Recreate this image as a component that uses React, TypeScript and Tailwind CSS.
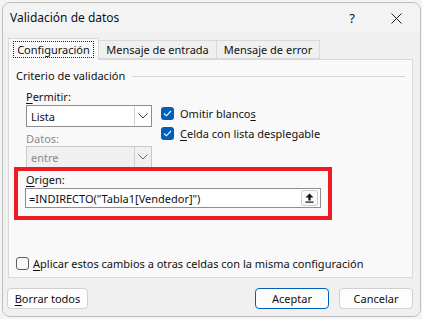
import React from "react";

const U = ({ children }: { children: React.ReactNode }) => (
  <span className="underline underline-offset-[2px] decoration-[1px]">{children}</span>
);

const Chevron = ({ color = "#444" }: { color?: string }) => (
  <svg width="10" height="6" viewBox="0 0 10 6" fill="none">
    <path d="M0.5 0.5 L5 5 L9.5 0.5" stroke={color} strokeWidth="1" />
  </svg>
);

const Check = () => (
  <span className="flex h-[13px] w-[13px] items-center justify-center rounded-[3px] bg-[#005fb8]">
    <svg width="9" height="7" viewBox="0 0 9 7" fill="none">
      <path d="M1 3.5 L3.4 5.8 L8 1" stroke="white" strokeWidth="1.1" />
    </svg>
  </span>
);

export default function App() {
  return (
    <div
      className="h-[319px] w-[422px] overflow-hidden bg-[#f4f4f4] pl-[2px] pr-[1px] pt-[2px] pb-[2px]"
      style={{ fontFamily: '"Noto Sans", "Open Sans", sans-serif' }}
    >
      <div className="flex h-[315px] flex-col overflow-hidden rounded-[8px] border border-[#bdbdbd] bg-[#f0f0f0] text-[11px] leading-[15px] text-[#111]">
        {/* Title bar */}
        <div className="flex h-[30px] items-center bg-[#f3f3f3] pl-[7px]">
          <span className="text-[12px] leading-[16px]">Validación de datos</span>
          <span className="ml-auto mr-[36px] text-[13px] leading-[16px]">?</span>
          <svg className="mr-[18px]" width="11" height="11" viewBox="0 0 11 11">
            <path d="M0.5 0.5 L10.5 10.5 M10.5 0.5 L0.5 10.5" stroke="#222" strokeWidth="1" />
          </svg>
        </div>

        <div className="flex flex-1 flex-col bg-[#f0f0f0] pl-[5px] pr-[7px] pt-[5px]">
          {/* Tabs */}
          <div className="flex items-end">
            <div className="relative z-10 -mb-px flex h-[22px] w-[91px] items-center justify-center border border-b-0 border-[#d9d9d9] bg-[#f9f9f9]">
              <span className="border border-dotted border-[#222] px-[3px] leading-[15px]">Configuración</span>
            </div>
            <div className="flex h-[19px] w-[118px] items-center justify-center border border-l-0 border-[#d9d9d9] bg-[#f0f0f0]">
              Mensaje de entrada
            </div>
            <div className="flex h-[19px] w-[103px] items-center justify-center border border-l-0 border-[#d9d9d9] bg-[#f0f0f0]">
              Mensaje de error
            </div>
          </div>

          {/* Panel */}
          <div className="flex h-[219px] flex-col border border-[#d9d9d9] bg-[#f9f9f9] pl-[7px] pt-[8px]">
            <div className="flex h-[15px] items-center">
              <span>Criterio de validación</span>
              <div className="ml-[7px] mr-[7px] mt-[1px] h-px flex-1 bg-[#d4d4d4]" />
            </div>

            <div className="mt-[6px] flex pl-[10px]">
              <div className="flex w-[126px] flex-col">
                <span className="h-[15px]">
                  <U>P</U>ermitir:
                </span>
                <div className="mt-[1px] flex h-[22px] items-center border border-[#8e8e8e] bg-white">
                  <span className="flex-1 pl-[4px]">Lista</span>
                  <div className="flex h-full w-[17px] items-center justify-center border-l border-[#d0d0d0]">
                    <Chevron />
                  </div>
                </div>
                <span className="mt-[4px] h-[15px] text-[#8a8a8a]">Datos:</span>
                <div className="flex h-[21px] items-center border border-b-0 border-[#c8c8c8] bg-[#f0f0f0]">
                  <span className="flex-1 pl-[4px] text-[#8a8a8a]">entre</span>
                  <div className="flex h-full w-[17px] items-center justify-center border-l border-[#d0d0d0]">
                    <Chevron color="#666" />
                  </div>
                </div>
              </div>
              <div className="ml-[9px] mt-[17px] flex flex-col gap-[5px]">
                <div className="flex h-[15px] items-center gap-[6px]">
                  <Check />
                  <span>
                    Omitir blanco<U>s</U>
                  </span>
                </div>
                <div className="flex h-[15px] items-center gap-[6px]">
                  <Check />
                  <span>
                    <U>C</U>elda con lista desplegable
                  </span>
                </div>
              </div>
            </div>

            {/* Red box */}
            <div className="-ml-[2px] w-[318px] border-[4px] border-[#ed1c24] pl-[8px] pt-[1px]">
              <span className="block h-[15px]">
                <U>O</U>rigen:
              </span>
              <div className="mt-[1px] flex h-[20px] w-[296px] -ml-[1px] items-center border border-[#8e8e8e] bg-white pl-[3px] pr-[2px]">
                <span className="flex-1">=INDIRECTO("Tabla1[Vendedor]")</span>
                <div className="flex h-[16px] w-[17px] items-center justify-center rounded-[2px] border border-[#cfcfcf] bg-[#fafafa]">
                  <svg width="9" height="10" viewBox="0 0 9 10">
                    <path d="M4.5 0.5 L8.5 4.5 L5.6 4.5 L5.6 7.5 L3.4 7.5 L3.4 4.5 L0.5 4.5 Z" fill="#111" />
                    <rect x="0.5" y="8.5" width="8" height="1.2" fill="#111" />
                  </svg>
                </div>
              </div>
              <div className="h-[8px]" />
            </div>

            <div className="mt-[36px] flex h-[15px] items-center gap-[4px]">
              <span className="h-[13px] w-[13px] rounded-[3px] border border-[#5f5f5f] bg-[#f9f9f9]" />
              <span>
                <U>A</U>plicar estos cambios a otras celdas con la misma configuración
              </span>
            </div>
          </div>

          {/* Buttons */}
          <div className="mt-[10px] flex items-center">
            <button className="ml-[-1px] h-[21px] w-[81px] rounded-[4px] border border-[#d0d0d0] bg-[#fdfdfd] text-[11px]">
              <U>B</U>orrar todos
            </button>
            <button className="ml-auto h-[21px] w-[74px] rounded-[4px] border border-[#005fb8] bg-[#fdfdfd] text-[11px]">
              Aceptar
            </button>
            <button className="ml-[10px] h-[21px] w-[74px] rounded-[4px] border border-[#d0d0d0] bg-[#fdfdfd] text-[11px]">
              Cancelar
            </button>
          </div>
        </div>
      </div>
    </div>
  );
}
